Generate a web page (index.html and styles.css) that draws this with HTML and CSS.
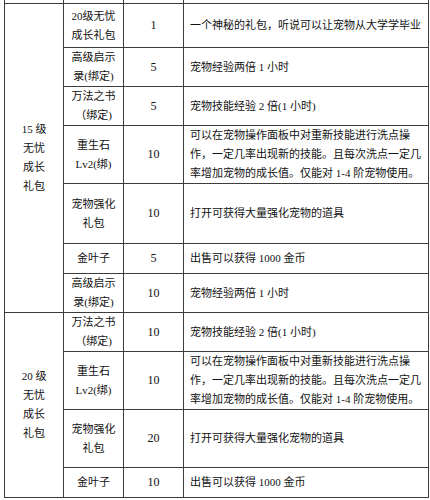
FILE: index.html
```html
<!DOCTYPE html>
<html lang="zh-CN">
<head>
<meta charset="utf-8">
<title>无忧成长礼包</title>
<link rel="stylesheet" href="styles.css">
</head>
<body>
<table class="gift">
  <colgroup>
    <col class="c-pack">
    <col class="c-item">
    <col class="c-num">
    <col class="c-desc">
  </colgroup>
  <tbody>
    <tr class="cut"><td></td><td></td><td></td><td></td></tr>
    <tr class="h44">
      <td class="pack" rowspan="7">15 级<br>无忧<br>成长<br>礼包</td>
      <td class="item">20级无忧<br>成长礼包</td>
      <td class="num">1</td>
      <td class="desc">一个神秘的礼包，听说可以让宠物从大学学毕业</td>
    </tr>
    <tr class="h39">
      <td class="item">高级启示<br>录(绑定)</td>
      <td class="num">5</td>
      <td class="desc">宠物经验两倍 1 小时</td>
    </tr>
    <tr class="h37">
      <td class="item">万法之书<br>（绑定)</td>
      <td class="num">5</td>
      <td class="desc">宠物技能经验 2 倍(1 小时)</td>
    </tr>
    <tr class="h58">
      <td class="item">重生石<br>Lv2(绑)</td>
      <td class="num">10</td>
      <td class="desc">可以在宠物操作面板中对重新技能进行洗点操<br>作，一定几率出现新的技能。且每次洗点一定几<br>率增加宠物的成长值。仅能对 1-4 阶宠物使用。</td>
    </tr>
    <tr class="h60">
      <td class="item">宠物强化<br>礼包</td>
      <td class="num">10</td>
      <td class="desc">打开可获得大量强化宠物的道具</td>
    </tr>
    <tr class="h30">
      <td class="item">金叶子</td>
      <td class="num">5</td>
      <td class="desc">出售可以获得 1000 金币</td>
    </tr>
    <tr class="h38">
      <td class="item">高级启示<br>录(绑定)</td>
      <td class="num">10</td>
      <td class="desc">宠物经验两倍 1 小时</td>
    </tr>
    <tr class="h38">
      <td class="pack" rowspan="4">20 级<br>无忧<br>成长<br>礼包</td>
      <td class="item">万法之书<br>（绑定)</td>
      <td class="num">10</td>
      <td class="desc">宠物技能经验 2 倍(1 小时)</td>
    </tr>
    <tr class="h58">
      <td class="item">重生石<br>Lv2(绑)</td>
      <td class="num">10</td>
      <td class="desc">可以在宠物操作面板中对重新技能进行洗点操<br>作，一定几率出现新的技能。且每次洗点一定几<br>率增加宠物的成长值。仅能对 1-4 阶宠物使用。</td>
    </tr>
    <tr class="h58">
      <td class="item">宠物强化<br>礼包</td>
      <td class="num">20</td>
      <td class="desc">打开可获得大量强化宠物的道具</td>
    </tr>
    <tr class="h30">
      <td class="item">金叶子</td>
      <td class="num">10</td>
      <td class="desc">出售可以获得 1000 金币</td>
    </tr>
  </tbody>
</table>
</body>
</html>
```
FILE: styles.css
```css
html, body {
  margin: 0;
  padding: 0;
  background: #ffffff;
}

body {
  font-family: "Liberation Serif", "Noto Sans CJK SC", serif;
  font-size: 11px;
  line-height: 19px;
  color: #111111;
}

.gift {
  border-collapse: collapse;
  table-layout: fixed;
  width: 424px;
  margin-left: 4px;
}

.c-pack { width: 59px; }
.c-item { width: 60px; }
.c-num  { width: 60px; }
.c-desc { width: 245px; }

.gift td {
  border: 1px solid #3c3c3c;
  padding: 0;
  vertical-align: middle;
  white-space: nowrap;
}

.gift .cut td {
  border-top: 0;
  height: 3px;
}

.pack,
.item,
.num {
  text-align: center;
}

.num {
  font-size: 12px;
}

.desc {
  text-align: left;
  padding-left: 6px !important;
}

.h30 { height: 30px; }
.h37 { height: 37px; }
.h38 { height: 38px; }
.h39 { height: 39px; }
.h44 { height: 44px; }
.h58 { height: 58px; }
.h60 { height: 60px; }
```
